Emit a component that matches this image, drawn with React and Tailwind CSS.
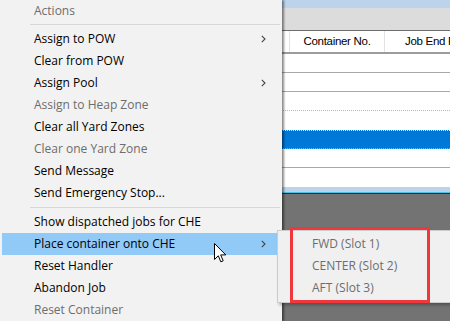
import React from "react";

const menuItems = [
  { type: "title", label: "Actions" },
  { type: "sep" },
  { label: "Assign to POW", sub: true },
  { label: "Clear from POW" },
  { label: "Assign Pool", sub: true },
  { label: "Assign to Heap Zone", disabled: true },
  { label: "Clear all Yard Zones" },
  { label: "Clear one Yard Zone", disabled: true },
  { label: "Send Message" },
  { label: "Send Emergency Stop..." },
  { type: "sep" },
  { label: "Show dispatched jobs for CHE" },
  { label: "Place container onto CHE", sub: true, active: true },
  { label: "Reset Handler" },
  { label: "Abandon Job" },
  { label: "Reset Container", disabled: true },
];

function Chevron() {
  return (
    <svg width="5" height="8" viewBox="0 0 5 8" className="absolute right-[11px] top-1/2 -translate-y-1/2">
      <path d="M0.8 0.8 L4 4 L0.8 7.2" fill="none" stroke="#444" strokeWidth="1.1" />
    </svg>
  );
}

function GridRow({ cls, children }) {
  return (
    <div className={"h-[19px] flex shrink-0 " + cls}>
      {children}
    </div>
  );
}

export default function App() {
  return (
    <div className="relative w-[450px] h-[321px] overflow-hidden bg-[#737373]" style={{ fontFamily: "'Open Sans', sans-serif" }}>
      {/* background window */}
      <div className="flex flex-col w-full">
        <div className="h-[8px] bg-[#bcd3ec]" />
        <div className="h-[23px] bg-[#dcdcdc] border-b border-[#6e6e6e]" />
        <div
          className="h-[23px] bg-white flex border-b-2 border-[#9c9c9c] pl-[289px] text-[11.5px] tracking-[-0.3px] text-black overflow-hidden"
          style={{ fontFamily: "'Liberation Sans', Arial, sans-serif" }}
        >
          <div className="w-[96px] shrink-0 border-l border-r border-[#e3e3e3] flex items-center justify-center">Container No.</div>
          <div className="flex-1 min-w-0 flex items-center pl-[20px] whitespace-nowrap overflow-hidden">Job End Position</div>
        </div>
        <GridRow cls="bg-white border-b border-[#a8a8a8]" />
        <GridRow cls="bg-white border-b border-[#a8a8a8]" />
        <GridRow cls="bg-white border-b border-dotted border-[#b8b8b8]" />
        <GridRow cls="bg-white" />
        <GridRow cls="bg-[#0078d7] border-t border-dotted border-[#cfe3f7] border-b border-b-[#a8a8a8]" />
        <GridRow cls="bg-white border-b border-[#a8a8a8]" />
        <div className="h-[19px] bg-white" />
        <div className="h-[5px] bg-[#bcd3ec]" />
        <div className="h-[1px] bg-[#4fc3e6]" />
        <div className="h-[1px] bg-[#2a2a2a]" />
      </div>

      {/* context menu */}
      <div className="absolute left-0 top-0 w-[282px] bg-[#f2f2f2] flex flex-col text-[12px] shadow-[2px_0_2px_rgba(0,0,0,0.45)]">
        {menuItems.map((it, i) => {
          if (it.type === "sep") {
            return (
              <div key={i} className="h-[7px] flex items-center pl-[30px] pr-[2px]">
                <div className="h-px w-full bg-[#d7d7d7]" />
              </div>
            );
          }
          if (it.type === "title") {
            return (
              <div key={i} className="h-[21px] flex items-center pl-[34px] text-[#6d6d6d]">
                {it.label}
              </div>
            );
          }
          return (
            <div
              key={i}
              className={
                "relative h-[22px] flex items-center pl-[32px] mx-[2px] mr-[5px] " +
                (it.active ? "bg-[#91c9f7] " : "") +
                (it.disabled ? "text-[#6d6d6d]" : "text-black")
              }
            >
              {it.label}
              {it.sub && <Chevron />}
            </div>
          );
        })}
      </div>

      {/* submenu */}
      <div className="absolute left-[277px] top-[230px] w-[200px] h-[73px] bg-[#f0f0f0] border border-[#cccccc] flex flex-col pt-[2px] text-[12px] text-[#6d6d6d] shadow-[2px_2px_3px_rgba(0,0,0,0.3)]">
        <div className="h-[22px] flex items-center pl-[34px]">FWD (Slot 1)</div>
        <div className="h-[22px] flex items-center pl-[34px]">CENTER (Slot 2)</div>
        <div className="h-[22px] flex items-center pl-[34px]">AFT (Slot 3)</div>
      </div>

      {/* red highlight box */}
      <div className="absolute left-[290px] top-[227px] w-[140px] h-[76px] border-[3px] border-[#f0383c]" />

      {/* mouse cursor */}
      <svg className="absolute left-[214px] top-[243px]" width="13" height="21" viewBox="0 0 13 21">
        <path
          d="M0.5 0.5 L0.5 16.5 L4.3 12.8 L6.8 18.8 L9.2 17.8 L6.7 11.9 L11.8 11.9 Z"
          fill="white"
          stroke="black"
          strokeWidth="1"
          strokeLinejoin="miter"
        />
      </svg>
    </div>
  );
}
